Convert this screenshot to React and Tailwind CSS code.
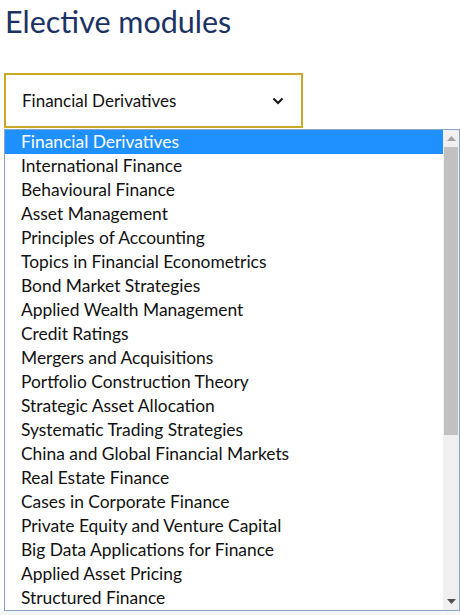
import React, { useState } from "react";

const modules = [
  "Financial Derivatives",
  "International Finance",
  "Behavioural Finance",
  "Asset Management",
  "Principles of Accounting",
  "Topics in Financial Econometrics",
  "Bond Market Strategies",
  "Applied Wealth Management",
  "Credit Ratings",
  "Mergers and Acquisitions",
  "Portfolio Construction Theory",
  "Strategic Asset Allocation",
  "Systematic Trading Strategies",
  "China and Global Financial Markets",
  "Real Estate Finance",
  "Cases in Corporate Finance",
  "Private Equity and Venture Capital",
  "Big Data Applications for Finance",
  "Applied Asset Pricing",
  "Structured Finance",
];

// Classic listbox scrollbar: arrow buttons, track and thumb
const ScrollBar = () => (
  <div className="w-[16px] flex flex-col bg-[#f0f0f0]">
    <div className="h-[17px] flex items-center justify-center">
      <svg width="9" height="5" viewBox="0 0 9 5">
        <path d="M0 5 L4.5 0 L9 5 Z" fill="#a3a3a3" />
      </svg>
    </div>
    <div className="mx-[1px] h-[288px] bg-[#c1c1c1]" />
    <div className="flex-1" />
    <div className="h-[17px] flex items-center justify-center">
      <svg width="9" height="5" viewBox="0 0 9 5">
        <path d="M0 0 L9 0 L4.5 5 Z" fill="#505050" />
      </svg>
    </div>
  </div>
);

const App = () => {
  const [selected, setSelected] = useState(modules[0]);

  return (
    <div
      className="min-h-screen bg-white text-black"
      style={{ fontFamily: "Lato, 'Open Sans', sans-serif" }}
    >
      <div className="pl-[4px] pt-[2px]">
        <h1 className="text-[30.5px] leading-[38px] text-[#1b3363] pl-[1px]">
          Elective modules
        </h1>

        {/* Select trigger */}
        <div className="mt-[33px] w-[299px] h-[55px] border-2 border-[#c9a927] flex items-center justify-between pl-[16px] pr-[16px]">
          <span className="text-[17px] text-[#111]">{selected}</span>
          <svg width="12" height="8" viewBox="0 0 12 8" className="mr-[1px]">
            <path
              d="M1.5 1.5 L6 6 L10.5 1.5"
              fill="none"
              stroke="#1a1a1a"
              strokeWidth="2.2"
            />
          </svg>
        </div>

        {/* Open option list */}
        <div className="mt-[1px] w-[456px] h-[482px] border border-[#8aa2c4] flex bg-white">
          <ul className="flex-1 flex flex-col">
            {modules.map((m) => (
              <li
                key={m}
                onClick={() => setSelected(m)}
                className={
                  "h-[24px] pl-[16px] text-[17.4px] leading-[24px] cursor-default whitespace-nowrap " +
                  (m === selected ? "bg-[#1e90ff] text-white" : "text-[#111]")
                }
              >
                {m}
              </li>
            ))}
          </ul>
          <ScrollBar />
        </div>
      </div>
      <div className="h-[4px] bg-[#f3f6fa]" />
    </div>
  );
};

export default App;
